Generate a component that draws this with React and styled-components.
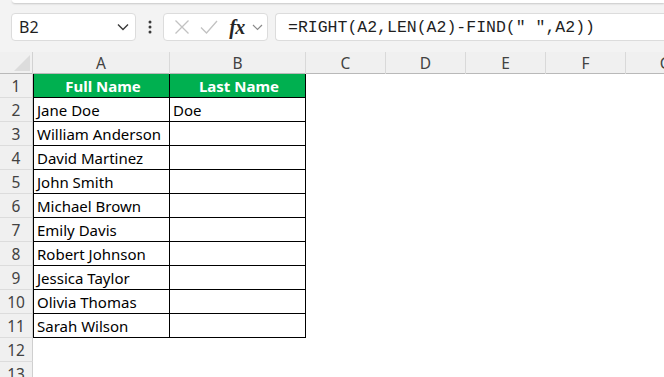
import React from "react";
import styled, { createGlobalStyle } from "styled-components";

const Global = createGlobalStyle`
  html, body { margin: 0; padding: 0; }
  body { background: #f3f3f3; font-family: "Noto Sans", "Liberation Sans", sans-serif; overflow: hidden; }
`;

const Page = styled.div`
  width: 664px;
  height: 377px;
  overflow: hidden;
  background: #f3f3f3;
`;

const TopPanel = styled.div`
  height: 3px;
  margin-left: 12px;
  background: #ffffff;
  border-bottom-left-radius: 5px;
  box-shadow: 0 1px 2px rgba(0,0,0,0.18);
`;

const Toolbar = styled.div`
  display: flex;
  align-items: center;
  height: 28px;
  margin-top: 10px;
  padding-left: 11px;
`;

const Box = styled.div`
  box-sizing: border-box;
  height: 28px;
  background: #ffffff;
  border: 1px solid #dcdcdc;
  border-radius: 4px;
  display: flex;
  align-items: center;
`;

const NameBox = styled(Box)`
  width: 125px;
  padding: 0 6px 0 7px;
  justify-content: space-between;
  font-size: 16px;
  color: #1f1f1f;
`;

const Dots = styled.div`
  width: 27px;
  display: flex;
  justify-content: center;
`;

const FxBox = styled(Box)`
  width: 105px;
  margin-right: 7px;
  padding-left: 6px;
`;

const IconSlot = styled.div`
  width: ${(p) => p.w}px;
  display: flex;
  justify-content: center;
  align-items: center;
`;

const Fx = styled.span`
  font-family: "Liberation Serif", "DejaVu Serif", serif;
  font-style: italic;
  font-weight: 700;
  font-size: 20px;
  color: #262626;
  line-height: 1;
  letter-spacing: -0.5px;
`;

const FormulaBox = styled(Box)`
  flex: 1;
  border-right: none;
  border-top-right-radius: 0;
  border-bottom-right-radius: 0;
  padding-left: 12px;
  font-family: "Liberation Mono", "DejaVu Sans Mono", monospace;
  font-size: 16.5px;
  color: #1f1f1f;
  white-space: pre;
`;

const Sheet = styled.div`
  margin-top: 11px;
  background: #ffffff;
  width: 706px;
`;

const COLS = "33px 137px 136px 80px 80px 80px 80px 80px";

const HeaderRow = styled.div`
  display: grid;
  grid-template-columns: ${COLS};
  height: 22px;
  box-sizing: border-box;
  background: #f0f0f0;
  border-bottom: 1px solid #b9b9b9;
`;

const ColHead = styled.div`
  box-sizing: border-box;
  border-right: 1px solid #d9d9d9;
  display: flex;
  align-items: center;
  justify-content: center;
  font-size: 15.5px;
  color: #424242;
  position: relative;
`;

const Corner = styled(ColHead)`
  border-right: 1px solid #d2d2d2;
`;

const Tri = styled.div`
  position: absolute;
  right: 2px;
  bottom: 3px;
  width: 0;
  height: 0;
  border-left: 16px solid transparent;
  border-bottom: 16px solid #dcdcdc;
`;

const Row = styled.div`
  display: grid;
  grid-template-columns: ${COLS};
  height: 24px;
`;

const RowHead = styled.div`
  box-sizing: border-box;
  background: #f0f0f0;
  border-right: 1px solid #cfcfcf;
  border-bottom: 1px solid #dcdcdc;
  display: flex;
  align-items: center;
  justify-content: center;
  font-size: 15.5px;
  color: #424242;
`;

const Cell = styled.div`
  box-sizing: border-box;
  display: flex;
  align-items: center;
  padding-left: 3px;
  justify-content: ${(p) => (p.head ? "center" : "flex-start")};
  background: ${(p) => (p.head ? "#00b050" : "#ffffff")};
  color: ${(p) => (p.head ? "#ffffff" : "#000000")};
  font-weight: ${(p) => (p.head ? 700 : 400)};
  font-size: 15px;
  white-space: nowrap;
  overflow: hidden;
  border-right: ${(p) => (p.table ? "1px solid #000" : "none")};
  border-bottom: ${(p) => (p.table ? "1px solid #000" : "none")};
  border-left: ${(p) => (p.table && p.first ? "1px solid #000" : "none")};
`;

const Chevron = () => (
  <svg width="12" height="8" viewBox="0 0 12 8">
    <path d="M1 1.5 L6 6.5 L11 1.5" fill="none" stroke="#3a3a3a" strokeWidth="1.4" />
  </svg>
);

const names = [
  "Jane Doe",
  "William Anderson",
  "David Martinez",
  "John Smith",
  "Michael Brown",
  "Emily Davis",
  "Robert Johnson",
  "Jessica Taylor",
  "Olivia Thomas",
  "Sarah Wilson",
];

const letters = ["A", "B", "C", "D", "E", "F", "G"];

export default function App() {
  return (
    <Page>
      <Global />
      <TopPanel />
      <Toolbar>
        <NameBox>
          <span>B2</span>
          <Chevron />
        </NameBox>
        <Dots>
          <svg width="4" height="14" viewBox="0 0 4 14">
            <circle cx="2" cy="2" r="1.5" fill="#3a3a3a" />
            <circle cx="2" cy="7" r="1.5" fill="#3a3a3a" />
            <circle cx="2" cy="12" r="1.5" fill="#3a3a3a" />
          </svg>
        </Dots>
        <FxBox>
          <IconSlot w={24}>
            <svg width="16" height="16" viewBox="0 0 16 16">
              <path d="M1.5 1.5 L14.5 14.5 M14.5 1.5 L1.5 14.5" stroke="#c2c2c2" strokeWidth="1.3" fill="none" />
            </svg>
          </IconSlot>
          <IconSlot w={30}>
            <svg width="18" height="14" viewBox="0 0 18 14">
              <path d="M1 7.5 L6.5 13 L17 1" stroke="#c2c2c2" strokeWidth="1.3" fill="none" />
            </svg>
          </IconSlot>
          <IconSlot w={26}>
            <Fx>fx</Fx>
          </IconSlot>
          <IconSlot w={14}>
            <svg width="11" height="7" viewBox="0 0 11 7">
              <path d="M1 1 L5.5 5.5 L10 1" fill="none" stroke="#8a8a8a" strokeWidth="1.2" />
            </svg>
          </IconSlot>
        </FxBox>
        <FormulaBox>{'=RIGHT(A2,LEN(A2)-FIND(" ",A2))'}</FormulaBox>
      </Toolbar>
      <Sheet>
        <HeaderRow>
          <Corner>
            <Tri />
          </Corner>
          {letters.map((l) => (
            <ColHead key={l}>{l}</ColHead>
          ))}
        </HeaderRow>
        {Array.from({ length: 13 }, (_, i) => {
          const r = i + 1;
          const inTable = r <= 11;
          let a = "";
          let b = "";
          if (r === 1) {
            a = "Full Name";
            b = "Last Name";
          } else if (r <= 11) {
            a = names[r - 2];
            if (r === 2) b = "Doe";
          }
          return (
            <Row key={r}>
              <RowHead>{r}</RowHead>
              <Cell table={inTable} first head={r === 1}>{a}</Cell>
              <Cell table={inTable} head={r === 1}>{b}</Cell>
              <Cell />
              <Cell />
              <Cell />
              <Cell />
              <Cell />
            </Row>
          );
        })}
      </Sheet>
    </Page>
  );
}
